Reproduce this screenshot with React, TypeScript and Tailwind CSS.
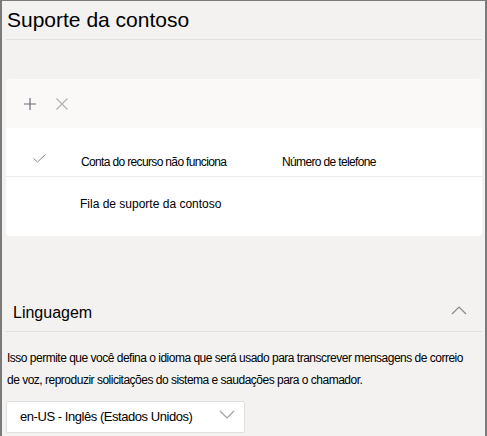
import React from "react";

const font = { fontFamily: '"Liberation Sans", Arial, sans-serif' };

function Chevron({ up, className }: { up?: boolean; className?: string }) {
  return (
    <svg width="16" height="9" viewBox="0 0 16 9" className={className} fill="none">
      <polyline
        points={up ? "1,8 8,1 15,8" : "1,1 8,8 15,1"}
        stroke="currentColor"
        strokeWidth="1.2"
      />
    </svg>
  );
}

export default function App() {
  return (
    <div
      style={font}
      className="w-[487px] h-[436px] overflow-hidden bg-[#f3f2f1] border-t border-l-2 border-r-2 border-[#7a7a7a] pl-[4px] pr-[3px] text-black"
    >
      {/* header */}
      <div className="h-[39px] border-b border-[#e1dfdd] pt-[6px] pl-[1px]">
        <h1 className="text-[21px] leading-[26px]">Suporte da contoso</h1>
      </div>

      {/* card */}
      <div className="mt-[39px] rounded-[3px] overflow-hidden">
        <div className="h-[49px] bg-[#faf9f8] flex items-center pl-[18px] gap-[20px]">
          <svg width="12" height="12" viewBox="0 0 12 12" className="text-[#6e6a76]">
            <path d="M6 0V12M0 6H12" stroke="currentColor" strokeWidth="1.2" />
          </svg>
          <svg width="12" height="12" viewBox="0 0 12 12" className="text-[#b3b0ad]">
            <path d="M0.5 0.5L11.5 11.5M11.5 0.5L0.5 11.5" stroke="currentColor" strokeWidth="1.1" />
          </svg>
        </div>
        <div className="bg-white">
          <div className="h-[49px] border-b border-[#edebe9] flex">
            <div className="w-[75px] pl-[27px] pt-[26px]">
              <svg width="13" height="9" viewBox="0 0 13 9" fill="none" className="text-[#8a8886]">
                <polyline points="0.5,4.5 4.5,8 12.5,0.5" stroke="currentColor" strokeWidth="1" />
              </svg>
            </div>
            <div className="pt-[26px] text-[12px] leading-[16px] tracking-[-0.65px] w-[201px]">
              Conta do recurso não funciona
            </div>
            <div className="pt-[26px] text-[12px] leading-[16px] tracking-[-0.65px]">
              Número de telefone
            </div>
          </div>
          <div className="h-[59px] pt-[19px] pl-[74px] text-[12px] leading-[16px]">
            Fila de suporte da contoso
          </div>
        </div>
      </div>

      {/* language */}
      <div className="mt-[57px] h-[39px] border-b border-[#e1dfdd] flex justify-between pl-[7px] pr-[15px]">
        <div className="pt-[10px] text-[16px] leading-[20px]">Linguagem</div>
        <div className="pt-[13px]">
          <Chevron up className="text-[#8a8886]" />
        </div>
      </div>
      <p className="mt-[15px] pl-[1px] text-[12px] leading-[22px] tracking-[-0.5px]">
        Isso permite que você defina o idioma que será usado para transcrever mensagens de correio
        <br />
        de voz, reproduzir solicitações do sistema e saudações para o chamador.
      </p>
      <div className="mt-[10px] w-[239px] h-[32px] bg-white border border-[#e1dfdd] rounded-[2px] flex items-center justify-between pl-[13px] pr-[9px]">
        <span className="text-[13px] tracking-[-0.45px]">en-US - Inglês (Estados Unidos)</span>
        <Chevron className="text-[#a19f9d] -mt-[6px]" />
      </div>
    </div>
  );
}
